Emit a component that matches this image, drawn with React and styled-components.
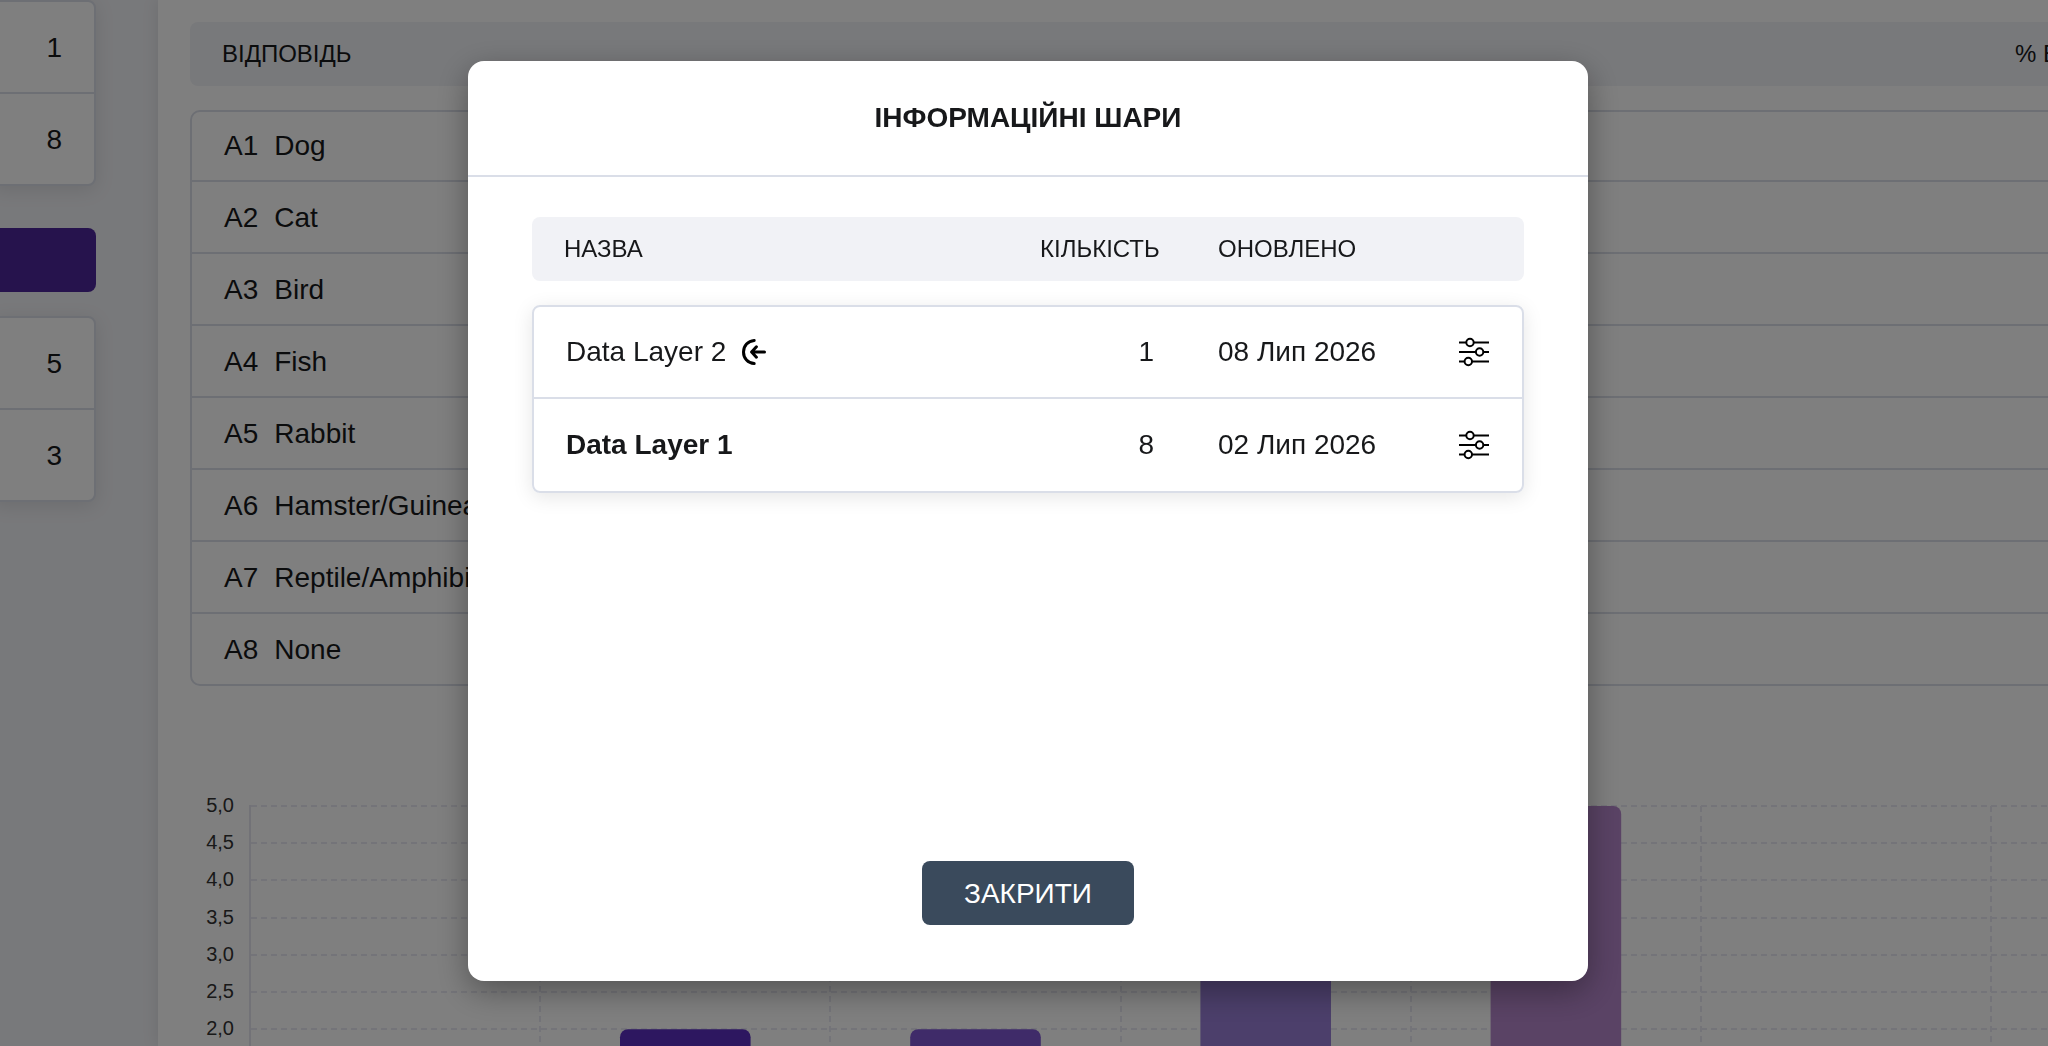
import React from 'react';
import styled, { createGlobalStyle } from 'styled-components';

const GlobalStyle = createGlobalStyle`
  * {
    box-sizing: border-box;
  }
  body {
    margin: 0;
    overflow: hidden;
    color: #17181a;
    background-color: #fff;
    font-family: 'Liberation Sans', Arial, Helvetica, sans-serif;
    font-size: 28px;
    line-height: 32px;
  }
`;

const Page = styled.div`
  display: flex;
  height: 100vh;
  overflow: hidden;
`;

const Sidebar = styled.aside`
  flex: 0 0 158px;
  padding-right: 62px;
  background-color: #f1f2f6;
`;
const CountList = styled.ul`
  margin: 0 0 0 -8px;
  padding: 0;
  list-style: none;
  background-color: #fff;
  border: 2px solid #dadee8;
  border-radius: 8px;
  box-shadow: 0 4px 20px rgba(0, 0, 0, 0.1);
`;
const CountItem = styled.li`
  display: flex;
  align-items: center;
  justify-content: flex-end;
  height: 90px;
  padding: 2px 32px 0;
  & + & {
    height: 92px;
    border-top: 2px solid #dadee8;
  }
`;
const SidebarButton = styled.button`
  display: block;
  width: 100%;
  height: 64px;
  margin: 42px 0 24px;
  border: none;
  border-radius: 0 8px 8px 0;
  background-color: #4c269a;
`;

const Main = styled.main`
  flex: 1;
  min-width: 0;
  padding: 22px 0 0 32px;
  background-color: #fff;
  box-shadow: 0 0 16px rgba(0, 0, 0, 0.1);
`;
/* the results are wider than the window and run off to the right */
const Results = styled.div`
  margin-right: -524px;
`;
const AnswerTable = styled.table`
  display: block;
  text-align: left;
`;
const AnswerHead = styled.thead`
  display: block;
  margin-bottom: 24px;
  border-radius: 8px;
  background-color: #f1f2f6;
`;
const AnswerBody = styled.tbody`
  display: block;
  border-radius: 10px;
  box-shadow: inset 0 0 0 2px #dadee8;
`;
const AnswerHeadRow = styled.tr`
  display: grid;
  grid-template-columns: 1fr 525px;
  align-items: center;
  height: 64px;
  padding: 0 32px;
`;
const HeadCell = styled.th`
  padding: 0;
  font-size: 24px;
  font-weight: 400;
  text-align: left;
`;
const AnswerRow = styled.tr`
  display: flex;
  gap: 16px;
  height: 72px;
  margin-left: 2px;
  padding: 0 32px;
  line-height: 72px;
  &:not(:last-child) {
    border-bottom: 2px solid #dadee8;
  }
`;
const Cell = styled.td`
  padding: 0;
`;

const Chart = styled.svg`
  display: block;
  margin-top: 104px;
  font-size: 20px;
`;

const Overlay = styled.div`
  position: fixed;
  inset: 0;
  display: flex;
  align-items: center;
  justify-content: center;
  padding: 0 0 4px 8px;
  background-color: rgba(0, 0, 0, 0.5);
`;
const Modal = styled.section`
  display: flex;
  flex-direction: column;
  width: 1120px;
  max-width: 100%;
  height: calc(100vh - 126px);
  border-radius: 16px;
  background-color: #fff;
  box-shadow: 0 10px 32px rgba(0, 0, 0, 0.35);
`;
const ModalHeader = styled.header`
  display: flex;
  align-items: center;
  justify-content: center;
  height: 116px;
  border-bottom: 2px solid #dadee8;
`;
const ModalTitle = styled.h2`
  margin: 0;
  font-size: 28px;
  font-weight: 700;
`;
const ModalContent = styled.div`
  flex: 1;
  padding: 40px 64px 0;
`;
const ModalFooter = styled.footer`
  display: flex;
  justify-content: center;
  padding-bottom: 56px;
`;
const CloseButton = styled.button`
  height: 64px;
  padding: 2px 42px 0;
  border: none;
  border-radius: 8px;
  color: #fff;
  background-color: #3a4a5c;
  font: inherit;
  cursor: pointer;
`;

const LayerTable = styled.table`
  display: block;
  text-align: left;
`;
const LayerHead = styled.thead`
  display: block;
  margin-bottom: 24px;
  border-radius: 8px;
  background-color: #f1f2f6;
`;
const LayerBody = styled.tbody`
  display: block;
  border: 2px solid #dadee8;
  border-radius: 8px;
  box-shadow: 0 4px 20px rgba(0, 0, 0, 0.1);
`;
const LayerRow = styled.tr`
  display: grid;
  grid-template-columns: 1fr 178px 240px 32px;
  align-items: center;
  height: 92px;
  padding: 0 32px;
  font-weight: ${({ $bold }) => ($bold ? 700 : 400)};
  &:not(:last-child) {
    border-bottom: 2px solid #dadee8;
  }
`;
const LayerHeadRow = styled(LayerRow)`
  height: 64px;
  padding: 0 34px 0 32px;
`;
const LayerName = styled.div`
  display: flex;
  align-items: center;
  gap: 14px;
`;
const DateCell = styled(Cell)`
  font-weight: 400;
`;
const CountCell = styled(DateCell)`
  padding-right: 64px;
  text-align: right;
`;
const IconButton = styled.button`
  display: flex;
  padding: 0;
  border: none;
  background: none;
  color: #000;
  cursor: pointer;
`;

const answers = ['Dog', 'Cat', 'Bird', 'Fish', 'Rabbit', 'Hamster/Guinea Pig', 'Reptile/Amphibian', 'None'];

const layers = [
  { name: 'Data Layer 2', count: 1, updated: '08 Лип 2026', incoming: true },
  { name: 'Data Layer 1', count: 8, updated: '02 Лип 2026', bold: true },
];

const bars = [
  { index: 1, value: 2, color: '#5a2ec0' },
  { index: 2, value: 2, color: '#7e56d2' },
  { index: 3, value: 3, color: '#987ed6' },
  { index: 4, value: 5, color: '#b486ca' },
];
const ticks = [5, 4.5, 4, 3.5, 3, 2.5, 2];

const AXIS = 60;
const TOP = 16;
const STEP = 290.2;
const UNIT = 74.4;
const CHART_HEIGHT = 400;

function IncomingIcon() {
  return (
    <svg width="28" height="28" viewBox="0 0 28 28" fill="none" stroke="#000" strokeWidth="3" strokeLinecap="round" strokeLinejoin="round">
      <path d="M14.2 2.4C8 2.8 3.5 7.600 3.500 14s4.500 11.200 10.700 11.600" />
      <path d="M24.500 14H12M16.400 8.800 11.600 14l4.800 5.200" />
    </svg>
  );
}

function SlidersIcon() {
  return (
    <svg width="32" height="32" viewBox="0 0 32 32" fill="none" stroke="currentColor" strokeWidth="2">
      <path d="M1 6.500h30M1 16h30M1 25.500h30" />
      <circle cx="12" cy="6.500" r="3.700" fill="#fff" />
      <circle cx="21.600" cy="16" r="3.700" fill="#fff" />
      <circle cx="10.300" cy="25.500" r="3.700" fill="#fff" />
    </svg>
  );
}

function AnswerChart() {
  return (
    <Chart width="2382" height={CHART_HEIGHT}>
      <g stroke="#e9e9f2" strokeWidth="2">
        <path d={`M${AXIS} ${TOP - 1}V${CHART_HEIGHT}`} stroke="#e4e4ee" />
        {ticks.map((tick) => {
          const y = Math.round(TOP + (5 - tick) * UNIT);
          return <path key={tick} d={`M${AXIS + 1} ${y}H2382`} strokeDasharray="6 4" />;
        })}
        {[1, 2, 3, 4, 5, 6, 7].map((n) => {
          const x = Math.round(AXIS + n * STEP);
          return <path key={n} d={`M${x} ${TOP}V${CHART_HEIGHT}`} strokeDasharray="6 4" />;
        })}
      </g>
      {bars.map(({ index, value, color }) => (
        <rect
          key={index}
          x={AXIS + STEP * (index + 0.275)}
          y={TOP + (5 - value) * UNIT}
          width={STEP * 0.45}
          height={CHART_HEIGHT}
          rx="8"
          fill={color}
        />
      ))}
      {ticks.map((tick) => (
        <text key={tick} x="44" y={Math.round(TOP + (5 - tick) * UNIT) + 6} textAnchor="end" fill="#333">
          {tick.toFixed(1).replace('.', ',')}
        </text>
      ))}
    </Chart>
  );
}

function LayersModal() {
  return (
    <Overlay>
      <Modal role="dialog" aria-labelledby="layers-title">
        <ModalHeader>
          <ModalTitle id="layers-title">ІНФОРМАЦІЙНІ ШАРИ</ModalTitle>
        </ModalHeader>
        <ModalContent>
          <LayerTable>
            <LayerHead>
              <LayerHeadRow>
                <HeadCell>НАЗВА</HeadCell>
                <HeadCell>КІЛЬКІСТЬ</HeadCell>
                <HeadCell>ОНОВЛЕНО</HeadCell>
              </LayerHeadRow>
            </LayerHead>
            <LayerBody>
              {layers.map((layer) => (
                <LayerRow key={layer.name} $bold={layer.bold}>
                  <Cell>
                    <LayerName>
                      {layer.name}
                      {layer.incoming && <IncomingIcon />}
                    </LayerName>
                  </Cell>
                  <CountCell>{layer.count}</CountCell>
                  <DateCell>{layer.updated}</DateCell>
                  <Cell>
                    <IconButton type="button" aria-label="Налаштування">
                      <SlidersIcon />
                    </IconButton>
                  </Cell>
                </LayerRow>
              ))}
            </LayerBody>
          </LayerTable>
        </ModalContent>
        <ModalFooter>
          <CloseButton type="button">ЗАКРИТИ</CloseButton>
        </ModalFooter>
      </Modal>
    </Overlay>
  );
}

function App() {
  return (
    <>
      <GlobalStyle />
      <Page>
        <Sidebar>
          <CountList>
            <CountItem>1</CountItem>
            <CountItem>8</CountItem>
          </CountList>
          <SidebarButton type="button" aria-label="Додати" />
          <CountList>
            <CountItem>5</CountItem>
            <CountItem>3</CountItem>
          </CountList>
        </Sidebar>
        <Main>
          <Results>
            <AnswerTable>
              <AnswerHead>
                <AnswerHeadRow>
                  <HeadCell>ВІДПОВІДЬ</HeadCell>
                  <HeadCell>% ВІДПОВІДЕЙ</HeadCell>
                </AnswerHeadRow>
              </AnswerHead>
              <AnswerBody>
                {answers.map((answer, i) => (
                  <AnswerRow key={answer}>
                    <Cell>A{i + 1}</Cell>
                    <Cell>{answer}</Cell>
                  </AnswerRow>
                ))}
              </AnswerBody>
            </AnswerTable>
            <AnswerChart />
          </Results>
        </Main>
      </Page>
      <LayersModal />
    </>
  );
}

export default App;
